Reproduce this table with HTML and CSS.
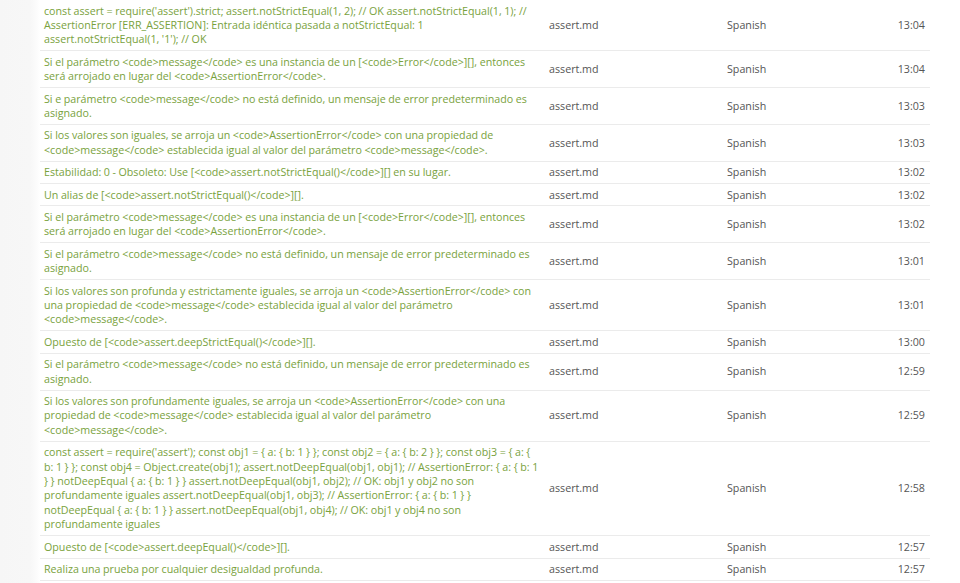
FILE: index.html
```html
<!DOCTYPE html>
<html lang="es">
<head>
<meta charset="utf-8">
<title>Traducciones</title>
<link rel="stylesheet" href="styles.css">
</head>
<body>
<div class="page">
  <aside class="side"></aside>
  <main class="main">
    <table class="log">
      <colgroup>
        <col class="c-text"><col class="c-file"><col class="c-lang"><col class="c-time">
      </colgroup>
      <tbody>
        <tr><td class="txt">const assert = require('assert').strict; assert.notStrictEqual(1, 2); // OK assert.notStrictEqual(1, 1); // AssertionError [ERR_ASSERTION]: Entrada idéntica pasada a notStrictEqual: 1 assert.notStrictEqual(1, '1'); // OK</td><td class="file">assert.md</td><td>Spanish</td><td class="time">13:04</td></tr>
        <tr><td class="txt">Si el parámetro &lt;code&gt;message&lt;/code&gt; es una instancia de un [&lt;code&gt;Error&lt;/code&gt;][], entonces será arrojado en lugar del &lt;code&gt;AssertionError&lt;/code&gt;.</td><td class="file">assert.md</td><td>Spanish</td><td class="time">13:04</td></tr>
        <tr><td class="txt">Si e parámetro &lt;code&gt;message&lt;/code&gt; no está definido, un mensaje de error predeterminado es asignado.</td><td class="file">assert.md</td><td>Spanish</td><td class="time">13:03</td></tr>
        <tr><td class="txt">Si los valores son iguales, se arroja un &lt;code&gt;AssertionError&lt;/code&gt; con una propiedad de &lt;code&gt;message&lt;/code&gt; establecida igual al valor del parámetro &lt;code&gt;message&lt;/code&gt;.</td><td class="file">assert.md</td><td>Spanish</td><td class="time">13:03</td></tr>
        <tr><td class="txt">Estabilidad: 0 - Obsoleto: Use [&lt;code&gt;assert.notStrictEqual()&lt;/code&gt;][] en su lugar.</td><td class="file">assert.md</td><td>Spanish</td><td class="time">13:02</td></tr>
        <tr><td class="txt">Un alias de [&lt;code&gt;assert.notStrictEqual()&lt;/code&gt;][].</td><td class="file">assert.md</td><td>Spanish</td><td class="time">13:02</td></tr>
        <tr><td class="txt">Si el parámetro &lt;code&gt;message&lt;/code&gt; es una instancia de un [&lt;code&gt;Error&lt;/code&gt;][], entonces será arrojado en lugar del &lt;code&gt;AssertionError&lt;/code&gt;.</td><td class="file">assert.md</td><td>Spanish</td><td class="time">13:02</td></tr>
        <tr><td class="txt">Si el parámetro &lt;code&gt;message&lt;/code&gt; no está definido, un mensaje de error predeterminado es asignado.</td><td class="file">assert.md</td><td>Spanish</td><td class="time">13:01</td></tr>
        <tr><td class="txt">Si los valores son profunda y estrictamente iguales, se arroja un &lt;code&gt;AssertionError&lt;/code&gt; con una propiedad de &lt;code&gt;message&lt;/code&gt; establecida igual al valor del parámetro &lt;code&gt;message&lt;/code&gt;.</td><td class="file">assert.md</td><td>Spanish</td><td class="time">13:01</td></tr>
        <tr><td class="txt">Opuesto de [&lt;code&gt;assert.deepStrictEqual()&lt;/code&gt;][].</td><td class="file">assert.md</td><td>Spanish</td><td class="time">13:00</td></tr>
        <tr><td class="txt">Si el parámetro &lt;code&gt;message&lt;/code&gt; no está definido, un mensaje de error predeterminado es asignado.</td><td class="file">assert.md</td><td>Spanish</td><td class="time">12:59</td></tr>
        <tr><td class="txt">Si los valores son profundamente iguales, se arroja un &lt;code&gt;AssertionError&lt;/code&gt; con una propiedad de &lt;code&gt;message&lt;/code&gt; establecida igual al valor del parámetro &lt;code&gt;message&lt;/code&gt;.</td><td class="file">assert.md</td><td>Spanish</td><td class="time">12:59</td></tr>
        <tr><td class="txt">const assert = require('assert'); const obj1 = { a: { b: 1 } }; const obj2 = { a: { b: 2 } }; const obj3 = { a: { b: 1 } }; const obj4 = Object.create(obj1); assert.notDeepEqual(obj1, obj1); // AssertionError: { a: { b: 1 } } notDeepEqual { a: { b: 1 } } assert.notDeepEqual(obj1, obj2); // OK: obj1 y obj2 no son profundamente iguales assert.notDeepEqual(obj1, obj3); // AssertionError: { a: { b: 1 } } notDeepEqual { a: { b: 1 } } assert.notDeepEqual(obj1, obj4); // OK: obj1 y obj4 no son profundamente iguales</td><td class="file">assert.md</td><td>Spanish</td><td class="time">12:58</td></tr>
        <tr><td class="txt">Opuesto de [&lt;code&gt;assert.deepEqual()&lt;/code&gt;][].</td><td class="file">assert.md</td><td>Spanish</td><td class="time">12:57</td></tr>
        <tr><td class="txt">Realiza una prueba por cualquier desigualdad profunda.</td><td class="file">assert.md</td><td>Spanish</td><td class="time">12:57</td></tr>
      </tbody>
    </table>
  </main>
</div>
</body>
</html>
```
FILE: styles.css
```css
html, body {
  margin: 0;
  padding: 0;
  background: #fff;
}
body {
  font-family: "Open Sans", "Noto Sans", sans-serif;
  font-size: 10.7px;
  line-height: 14.4px;
  color: #555;
  overflow: hidden;
  height: 583px;
}
.page {
  display: flex;
  height: 583px;
}
.side {
  flex: 0 0 40px;
  background: linear-gradient(to right, #f6f6f6 0, #f7f7f7 30px, #fcfcfc 37px, #fff 40px);
}
.main {
  flex: 0 0 890px;
  margin-top: -1px;
}
.log {
  width: 890px;
  border-collapse: collapse;
  table-layout: fixed;
}
.c-text { width: 505px; }
.c-file { width: 178px; }
.c-lang { width: 107px; }
.c-time { width: 100px; }
.log td {
  padding: 3.5px 4px;
  border-top: 1px solid #ebebeb;
  border-bottom: 1px solid #ebebeb;
  vertical-align: middle;
}
.log td.txt {
  color: #79a23d;
  word-spacing: -0.2px;
}
.log td.time {
  text-align: right;
  padding-right: 5px;
}
```
